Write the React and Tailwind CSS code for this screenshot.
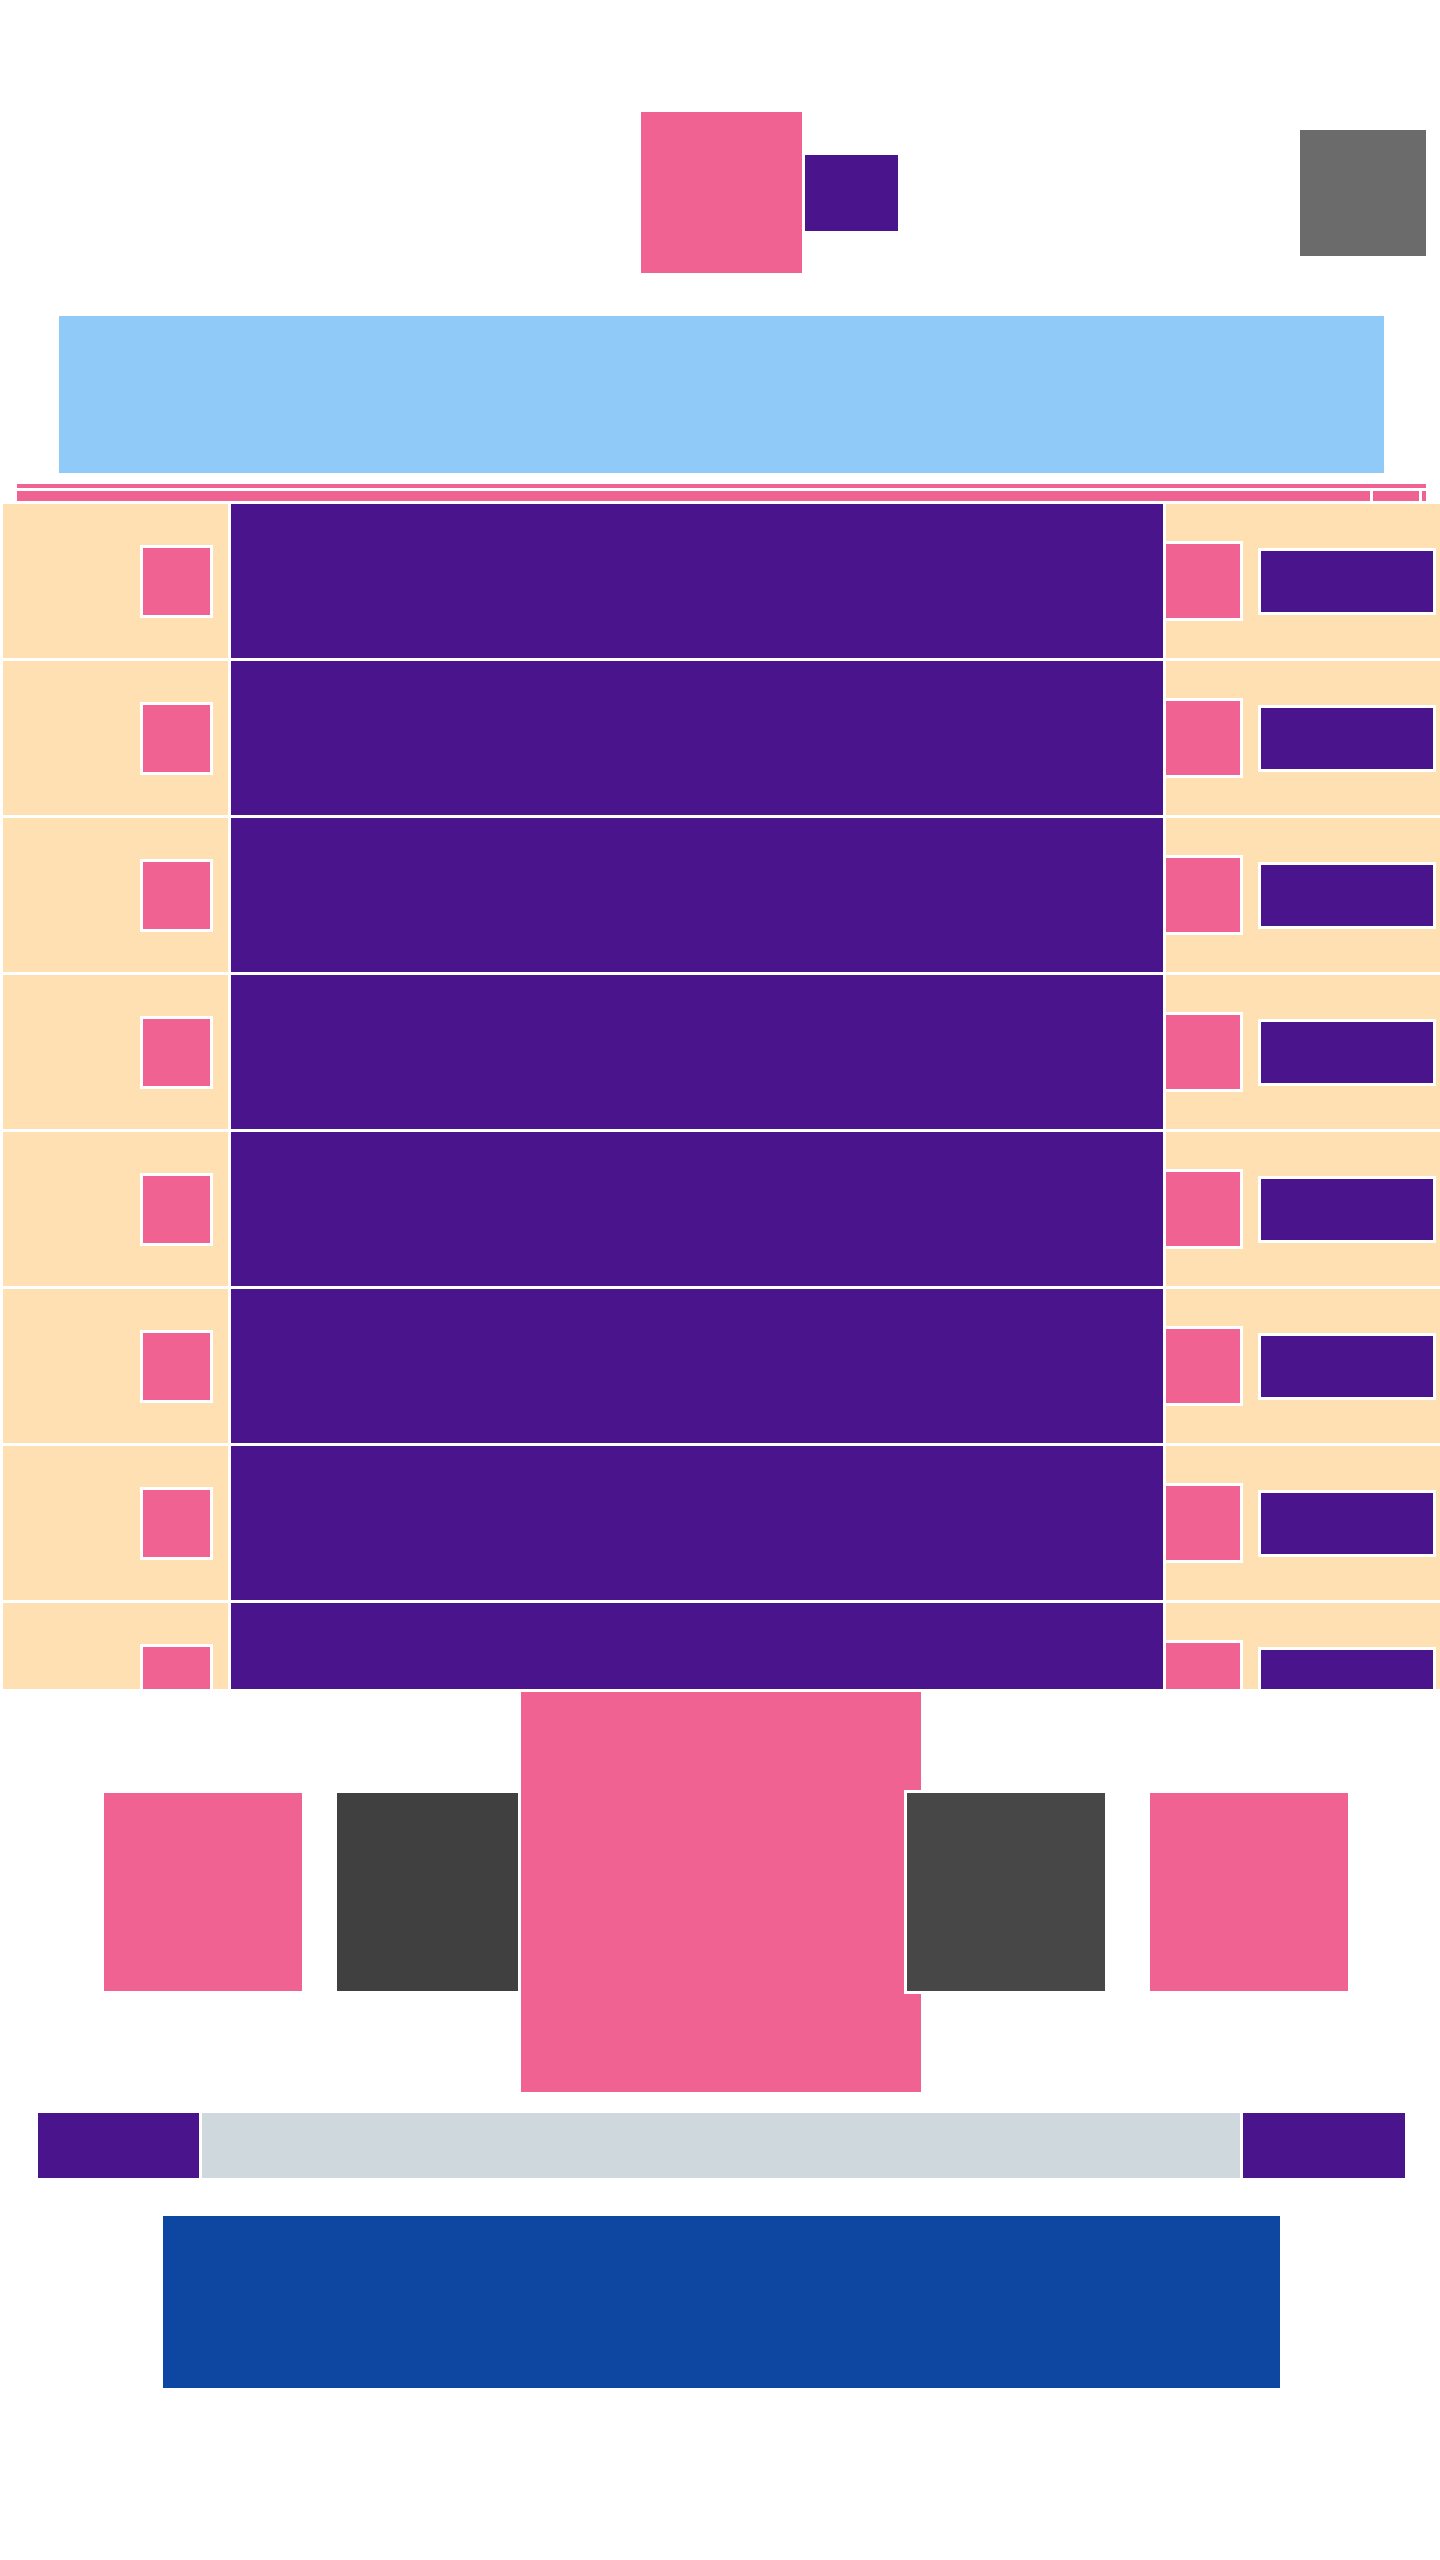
const ROWS = [1, 2, 3, 4, 5, 6, 7, 8]

function Row() {
  return (
    <div className="flex gap-[3px] h-[154px] shrink-0">
      <div className="w-[225px] bg-[#FFE0B2] flex items-center justify-end pr-[15px]">
        <div className="w-[73px] h-[73px] border-[3px] border-white bg-[#F06292]" />
      </div>
      <div className="w-[932px] bg-[#4A148C]" />
      <div className="flex-1 bg-[#FFE0B2] flex items-center">
        <div className="ml-[-3px] w-[80px] h-[80px] border-[3px] border-white bg-[#F06292] shrink-0" />
        <div className="ml-[15px] w-[178px] h-[67px] border-[3px] border-white bg-[#4A148C] shrink-0" />
      </div>
    </div>
  )
}

export default function App() {
  return (
    <div className="w-[1440px] min-h-[2560px] bg-white overflow-hidden">
      {/* top bar */}
      <div className="flex items-center pt-[112px]">
        <div className="ml-[641px] w-[161px] h-[161px] bg-[#F06292]" />
        <div className="ml-[3px] w-[93px] h-[76px] bg-[#4A148C]" />
        <div className="ml-auto mr-[14px] w-[126px] h-[126px] bg-[#6B6B6B]" />
      </div>

      <div className="mt-[43px] ml-[59px] w-[1325px] h-[157px] bg-[#90CAF9]" />

      {/* tabs */}
      <div className="mt-[11px] ml-[17px] w-[1409px] h-[4px] bg-[#F06292]" />
      <div className="mt-[3px] ml-[17px] flex gap-[3px] h-[10px]">
        <div className="w-[1353px] bg-[#F06292]" />
        <div className="w-[46px] bg-[#F06292]" />
        <div className="w-[4px] bg-[#F06292]" />
      </div>

      {/* list */}
      <div className="mt-[3px] pl-[3px] h-[1185px] overflow-hidden flex flex-col gap-[3px]">
        {ROWS.map(r => <Row key={r} />)}
      </div>

      {/* carousel */}
      <div className="flex items-center h-[406px]">
        <div className="ml-[104px] w-[198px] h-[198px] bg-[#F06292] shrink-0" />
        <div className="ml-[35px] w-[181px] h-[198px] bg-[#404040] shrink-0" />
        <div className="w-[406px] h-[406px] border-[3px] border-white bg-[#F06292] shrink-0" />
        <div className="relative z-10 ml-[-20px] w-[204px] h-[204px] border-[3px] border-white bg-[#474747] shrink-0" />
        <div className="ml-[42px] w-[198px] h-[198px] bg-[#F06292] shrink-0" />
      </div>

      {/* pager */}
      <div className="mt-[18px] ml-[38px] flex gap-[3px] h-[65px]">
        <div className="w-[161px] bg-[#4A148C]" />
        <div className="w-[1038px] bg-[#CFD8DC]" />
        <div className="w-[162px] bg-[#4A148C]" />
      </div>

      <div className="mt-[38px] ml-[163px] w-[1117px] h-[172px] bg-[#0D47A1]" />
    </div>
  )
}
